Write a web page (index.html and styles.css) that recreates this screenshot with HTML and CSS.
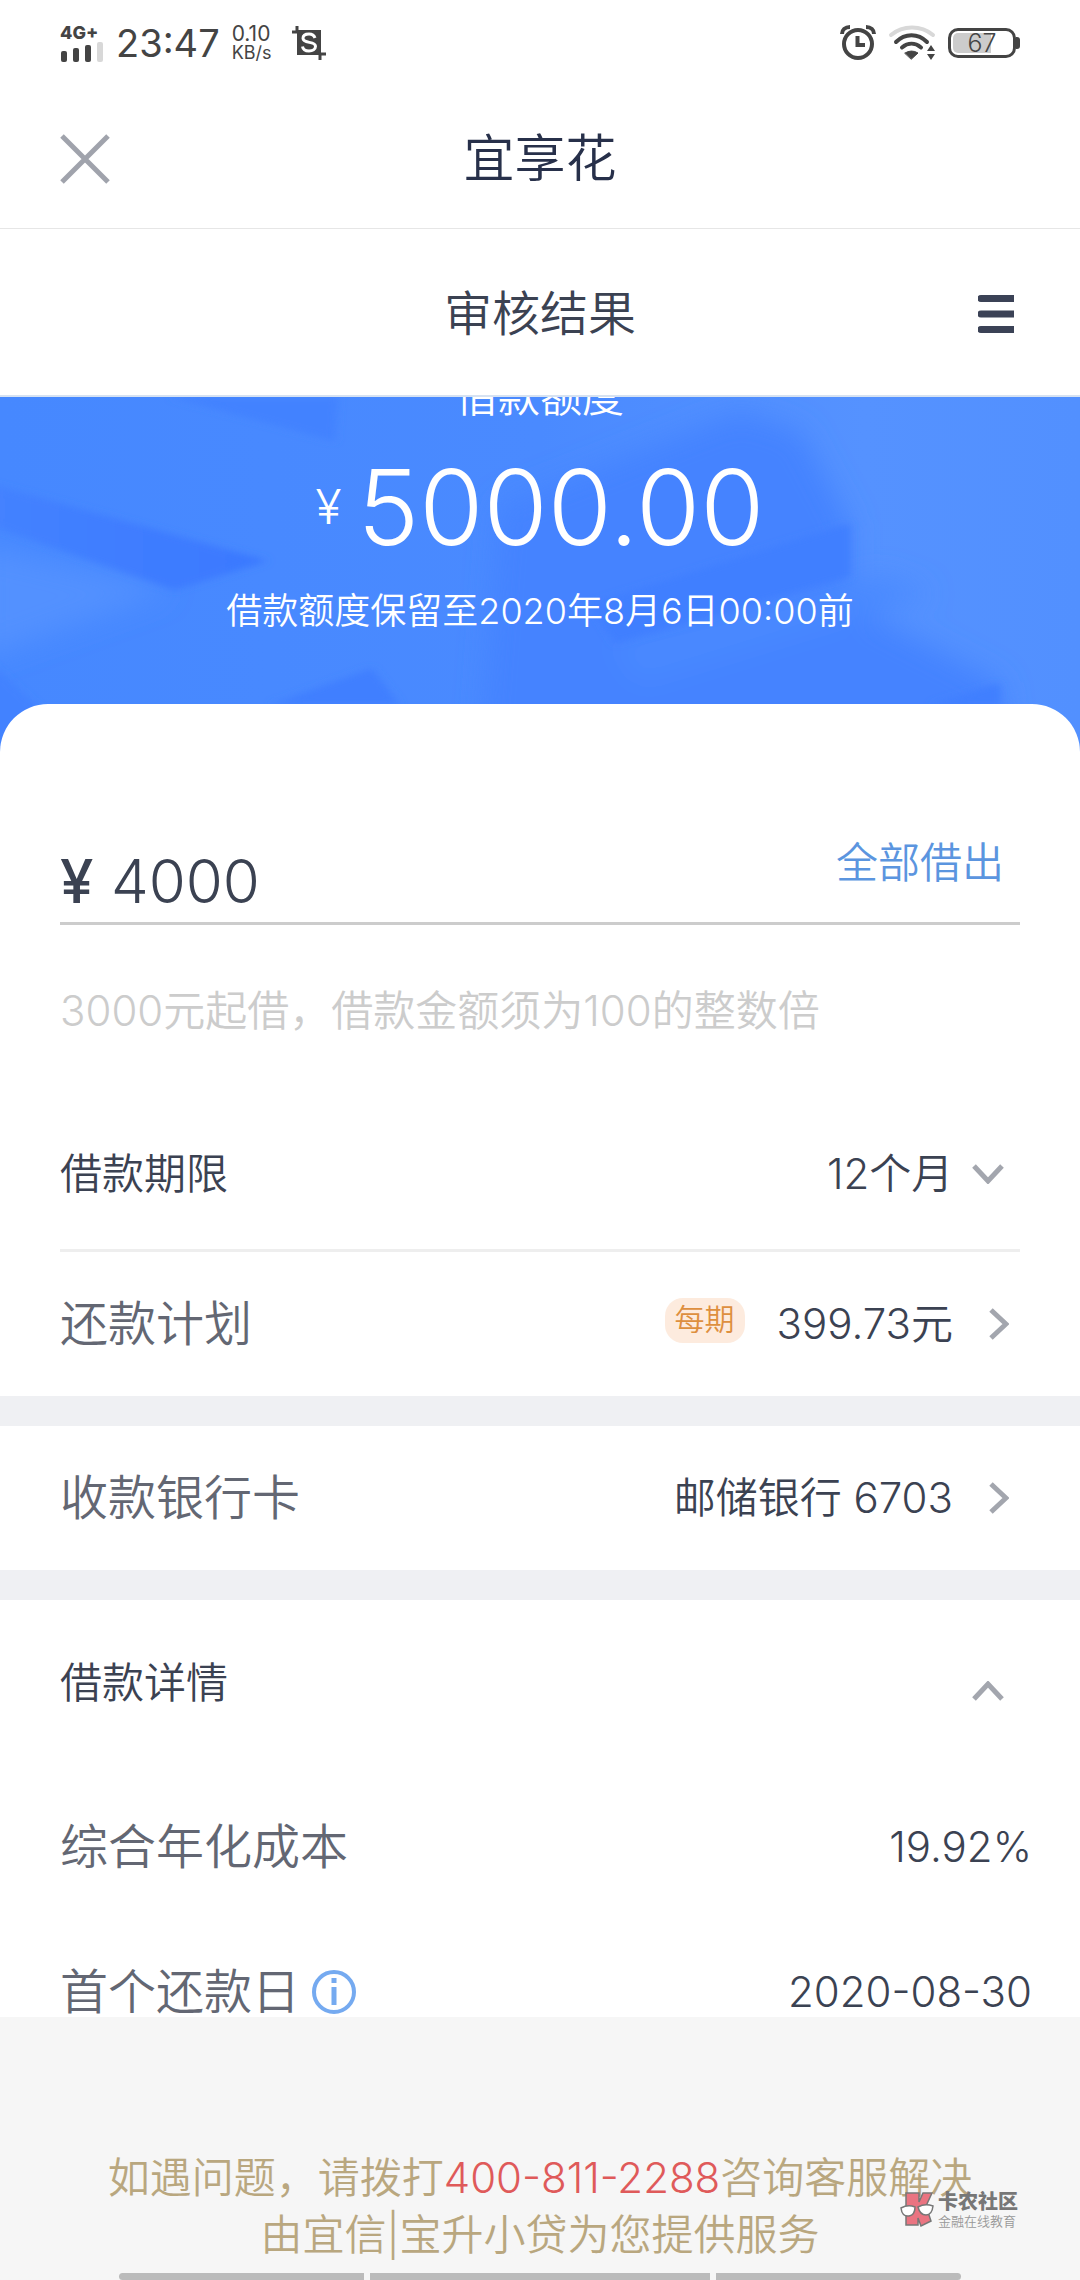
FILE: index.html
```html
<!DOCTYPE html>
<html lang="zh-CN">
<head>
<meta charset="utf-8">
<meta name="viewport" content="width=device-width, initial-scale=1">
<title>宜享花</title>
<link rel="stylesheet" href="styles.css">
</head>
<body>
<div class="status">
  <div class="status-side">
    <div class="signal">
      <span class="signal-type">4G+</span>
      <svg width="43" height="20" viewBox="0 0 43 20" fill="#444" aria-hidden="true">
        <rect x="1" y="9" width="6" height="11" rx="2"/><rect x="13" y="6" width="6" height="14" rx="2"/><rect x="25" y="3" width="6" height="17" rx="2"/><rect x="37" y="0" width="6" height="20" rx="2" fill="#d8d8d8"/>
      </svg>
    </div>
    <span class="clock">23:47</span>
    <div class="speed"><span class="speed-value">0.10</span><span class="speed-unit">KB/s</span></div>
    <svg width="34" height="34" viewBox="0 0 34 34" fill="none" aria-hidden="true">
      <rect x="5" y="4" width="24" height="25" fill="#444"/>
      <path d="M0 6h6M5 0v6M28 28h6M28 28v6" stroke="#444" stroke-width="3"/>
      <path d="M23 12c-1-3-4-4-6-4-3 0-6 1-6 4.300 0 5.700 12.500 2.500 12.500 8 0 3-3 4.700-6.500 4.700-3 0-6-1.500-6.500-4.500" stroke="#fff" stroke-width="3"/>
    </svg>
  </div>
  <div class="status-side status-right">
    <svg width="36" height="36" viewBox="0 0 36 36" fill="none" stroke="#444" aria-hidden="true">
      <circle cx="18" cy="19" r="14" stroke-width="4"/>
      <path d="M17.500 11v9h7.500" stroke-width="4"/>
      <path d="M2 9c0-4 3-7 8-7M34 9c0-4-3-7-8-7" stroke-width="4"/>
    </svg>
    <svg width="48" height="36" viewBox="0 0 48 36" fill="none" stroke-width="4" stroke-linecap="round" aria-hidden="true">
      <path d="M3 10c12-10 30-10 42 0" stroke="#d8d8d8"/>
      <path d="M8 17c9-9 22-9 31 0M14 22.500c6-5 13-5 19 0" stroke="#444"/>
      <path d="M17 28q6.500-4 13 0l-6.500 6z" fill="#444" stroke="#444" stroke-width="1"/>
      <path d="M39 26l4-6 4 6zM39 29l4 6 4-6z" fill="#444"/>
    </svg>
    <div class="battery"><span class="battery-body">67</span><span class="battery-tip"></span></div>
  </div>
</div>

<header class="appbar">
  <button class="icon-btn" aria-label="关闭">
    <svg width="50" height="50" viewBox="0 0 50 50" stroke="#a0a3ac" stroke-width="5" aria-hidden="true"><path d="M2 2l46 46M48 2L2 48"/></svg>
  </button>
  <h1 class="app-title">宜享花</h1>
</header>
<div class="subbar">
  <h2 class="page-title">审核结果</h2>
  <button class="icon-btn" aria-label="菜单">
    <svg width="36" height="38" viewBox="0 0 36 38" fill="#3b4256" aria-hidden="true"><path d="M3 0h33v7H3a3.500 3.500 0 010-7zM3 15.500h33v7H3a3.500 3.500 0 010-7zM3 31h33v7H3a3.500 3.500 0 010-7z"/></svg>
  </button>
</div>

<main class="content">
  <section class="hero">
    <svg class="hero-art" viewBox="0 0 1080 360" preserveAspectRatio="none" aria-hidden="true">
      <defs>
        <linearGradient id="base" x1="0" x2="1" y1="0" y2="0"><stop offset="0" stop-color="#4688ff"/><stop offset=".5" stop-color="#4a8aff"/><stop offset=".8" stop-color="#5592ff"/><stop offset="1" stop-color="#5290ff"/></linearGradient>
        <linearGradient id="band" x1="0" x2="1" y1="0" y2="0"><stop offset="0" stop-color="#4482ff"/><stop offset="1" stop-color="#3a78ff"/></linearGradient>
        <filter id="soft" x="-20%" y="-20%" width="140%" height="140%"><feGaussianBlur stdDeviation="4"/></filter>
        <filter id="softer" x="-20%" y="-20%" width="140%" height="140%"><feGaussianBlur stdDeviation="14"/></filter>
      </defs>
      <rect width="1080" height="360" fill="url(#base)"/>
      <g filter="url(#softer)">
        <path d="M500 110L740 15L800 35L850 130L850 210L1000 290L1010 370L480 370Z" fill="#4483ff"/>
        <path d="M610 250L880 182L930 200L640 290Z" fill="#4a89ff"/>
        <path d="M-20 150L170 195L-20 265Z" fill="#5291ff"/>
      </g>
      <g filter="url(#soft)">
        <path d="M170 0L338 0L335 45Z" fill="#4282ff"/>
        <path d="M-10 88L268 166L175 196L-10 130Z" fill="url(#band)"/>
        <path d="M850 128L850 182L615 250L590 210Z" fill="#407fff"/>
        <path d="M372 275L270 312L400 312Z" fill="#407fff"/>
        <path d="M-10 270L42 318L-10 360Z" fill="#4282ff"/>
        <path d="M1000 290L930 312L1000 312Z" fill="#407fff"/>
      </g>
    </svg>
    <div class="hero-text">
      <p class="hero-label">借款额度</p>
      <p class="hero-amount"><span class="hero-currency">¥</span><span>5000.00</span></p>
      <p class="hero-note">借款额度保留至2020年8月6日00:00前</p>
    </div>
  </section>

  <section class="card">
    <div class="amount-row">
      <label class="currency" for="amount">¥</label>
      <input class="amount" id="amount" type="text" inputmode="numeric" value="4000">
      <button class="borrow-all">全部借出</button>
    </div>
    <p class="hint">3000元起借，借款金额须为100的整数倍</p>
    <div class="row row-term">
      <label class="name-strong" for="term">借款期限</label>
      <div class="value value-term">
        <select class="term" id="term"><option>12个月</option></select>
        <svg width="32" height="20" viewBox="0 0 32 20" class="chevron" aria-hidden="true"><path d="M2 2l14 15L30 2"/></svg>
      </div>
    </div>
    <a class="row" href="#plan">
      <span class="name">还款计划</span>
      <span class="value"><span class="badge">每期</span><span>399.73元</span>
        <svg width="20" height="32" viewBox="0 0 20 32" class="chevron chevron-side" aria-hidden="true"><path d="M2 2l15 14L2 30"/></svg>
      </span>
    </a>
  </section>

  <section class="block">
    <a class="row" href="#card">
      <span class="name">收款银行卡</span>
      <span class="value"><span>邮储银行 6703</span>
        <svg width="20" height="32" viewBox="0 0 20 32" class="chevron chevron-side" aria-hidden="true"><path d="M2 2l15 14L2 30"/></svg>
      </span>
    </a>
  </section>

  <section class="block">
    <button class="row details-toggle" aria-expanded="true">
      <span class="name-strong">借款详情</span>
      <svg width="32" height="20" viewBox="0 0 32 20" class="chevron chevron-up" aria-hidden="true"><path d="M2 18L16 3l14 15"/></svg>
    </button>
    <dl class="details">
      <div class="detail"><dt class="name">综合年化成本</dt><dd class="detail-value">19.92%</dd></div>
      <div class="detail">
        <dt class="name name-info">首个还款日
          <svg width="44" height="44" viewBox="0 0 44 44" fill="none" stroke="#75aaf0" aria-hidden="true"><circle cx="22" cy="22" r="20" stroke-width="4"/><path d="M22 8v5M22 17v18" stroke-width="5"/></svg>
        </dt>
        <dd class="detail-value">2020-08-30</dd>
      </div>
    </dl>
  </section>
</main>

<footer class="footer">
  <p class="help">如遇问题，请拨打<a class="phone" href="tel:400-811-2288">400-811-2288</a>咨询客服解决</p>
  <p class="help">由宜信|宝升小贷为您提供服务</p>
  <div class="nav-hints"><span></span><span></span><span></span></div>
  <div class="watermark">
    <svg width="34" height="36" viewBox="0 0 34 36" aria-hidden="true">
      <path d="M6 1h13v9l4-9h9l-6 13 5 15-10 5-3-8v7H6z" fill="#ea7481" stroke="#777" stroke-width="1.500"/>
      <path d="M1 16q7-4 14-1 0 8-6 9-7 1-8-8zM18 15q7-4 15-1-1 9-7 9t-8-8z" fill="#fff" stroke="#777" stroke-width="1.500"/>
    </svg>
    <div class="watermark-text"><strong>卡农社区</strong><small>金融在线教育</small></div>
  </div>
</footer>
</body>
</html>
```
FILE: styles.css
```css
* { box-sizing: border-box; }

body {
  margin: 0;
  height: 100vh;
  display: flex;
  flex-direction: column;
  background: #fff;
  color: #3b4252;
  font: 350 42px/60px Inter, "Noto Sans CJK SC", sans-serif;
}

h1, h2, p, dl, dd { margin: 0; font-weight: 350; }
button, input, select { font: inherit; color: inherit; background: none; border: 0; padding: 0; margin: 0; }
a { color: inherit; text-decoration: none; }
svg { display: block; flex: none; }

/* system status bar */
.status { display: flex; justify-content: space-between; align-items: center; height: 86px; padding: 0 60px; color: #444; flex: none; }
.status-side { display: flex; align-items: center; }
.signal { width: 56px; }
.signal-type { display: block; font-size: 18px; line-height: 18px; font-weight: 800; }
.clock { font-size: 38px; font-weight: 400; line-height: 48px; margin-right: 12px; }
.speed { display: flex; flex-direction: column; width: 60px; font-weight: 400; line-height: 19px; }
.speed-value { font-size: 21px; }
.speed-unit { font-size: 18px; }
.status-right { gap: 12px; }
.battery { display: flex; align-items: center; }
.battery-body { width: 68px; height: 30px; padding: 2px; border: 3px solid #444; border-radius: 10px; background: linear-gradient(90deg, #ccc 66%, #fff 66%) content-box; font-size: 25px; font-weight: 350; line-height: 20px; text-align: center; }
.battery-tip { width: 4px; height: 12px; background: #444; border-radius: 0 3px 3px 0; }

/* title bars */
.appbar, .subbar { display: grid; grid-template-columns: 60px 1fr 60px; align-items: center; padding: 3px 60px 0; flex: none; }
.appbar { height: 143px; border-bottom: 1px solid #e6e6e6; }
.app-title { font-size: 51px; text-align: center; color: #27304a; }
.subbar { height: 168px; border-bottom: 2px solid #d6e2f2; }
.page-title { grid-column: 2; font-size: 48px; text-align: center; }
.subbar .icon-btn { justify-self: end; margin-right: 6px; }

/* scrolled content */
.content { flex: 1; min-height: 0; overflow: hidden; }
.hero { position: relative; display: flow-root; height: 355px; overflow: hidden; color: #fff; text-align: center; }
.hero-art { position: absolute; top: 0; left: 0; width: 100%; height: 100%; }
.hero-text { position: relative; }
.hero-label { margin-top: -30px; }
.hero-amount { display: flex; justify-content: center; align-items: center; gap: 16px; margin-top: 20px; font-size: 104px; line-height: 120px; }
.hero-currency { font-size: 48px; }
.hero-note { margin-top: 20px; font-size: 36px; line-height: 48px; }

.card { position: relative; margin-top: -48px; padding: 120px 60px 0; background: #fff; border-radius: 48px 48px 0 0; }
.amount-row { display: flex; align-items: flex-end; height: 101px; padding-bottom: 5px; border-bottom: 3px solid #ccc; font-size: 60px; line-height: 72px; }
.currency { width: 51px; font-weight: 500; }
.amount { flex: 1; min-width: 0; height: 72px; }
.borrow-all { align-self: flex-start; margin: 9px 16px 0 0; font-size: 42px; line-height: 60px; color: #5b95df; }
.hint { margin: 56px 0 58px; color: #ccc; }
.row { display: flex; justify-content: space-between; align-items: center; width: 100%; height: 144px; text-align: left; }
.row-term { height: 153px; border-bottom: 3px solid #eee; }
.name { font-size: 48px; color: #636773; }
.value { display: flex; align-items: center; }
.value-term { gap: 18px; padding-right: 16px; }
.term { appearance: none; }
.chevron { fill: none; stroke: #a3a6ae; stroke-width: 5; }
.chevron-side { margin: 0 11px 0 36px; }
.badge { height: 45px; margin: 0 32px 8px 0; padding: 0 10px; border-radius: 18px; background: #fdebde; color: #de8f3f; font-size: 30px; line-height: 42px; }

.block { border-top: 30px solid #eff0f3; padding: 0 60px; }
.details-toggle { height: 166px; }
.chevron-up { margin: 16px 16px 0 0; }
.details { margin-right: -12px; padding-top: 8px; }
.detail { display: flex; justify-content: space-between; align-items: center; height: 145px; }
.name-info { display: flex; align-items: center; gap: 12px; }

/* service footer */
.footer { position: relative; flex: none; padding-top: 132px; background: #f6f6f6; text-align: center; }
.help { line-height: 57px; color: #b9a77f; }
.phone { color: #df5a5a; }
.nav-hints { display: grid; grid-template-columns: 244fr 338fr 244fr; gap: 6px; margin-top: 10px; padding: 0 11%; }
.nav-hints span { height: 7px; background: #bbb; }
.nav-hints span:first-child { border-radius: 4px 0 0 4px; }
.nav-hints span:last-child { border-radius: 0 4px 4px 0; }
.watermark { position: absolute; right: 62px; bottom: 51px; display: flex; gap: 4px; color: #777; text-align: left; }
.watermark-text { display: flex; flex-direction: column; }
.watermark-text strong { font-size: 20px; line-height: 21px; font-weight: 900; }
.watermark-text small { font-size: 13px; line-height: 16px; color: #999; }
```
